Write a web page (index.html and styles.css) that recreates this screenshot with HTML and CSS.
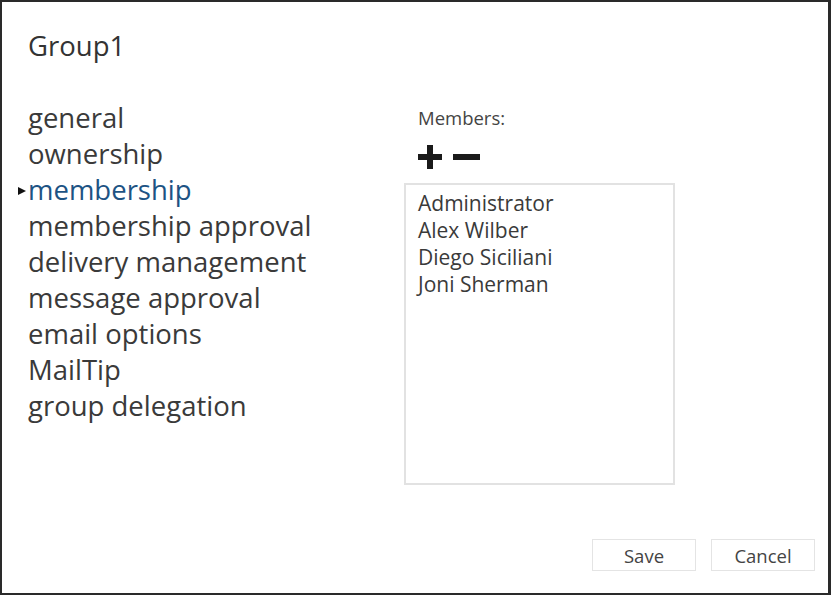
FILE: index.html
```html
<!DOCTYPE html>
<html lang="en">
<head>
<meta charset="UTF-8">
<title>Group1</title>
<link rel="stylesheet" href="styles.css">
</head>
<body>
<div class="dialog">
    <h1 class="titulo">Group1</h1>

    <div class="corpo">
        <ul class="menu">
            <li>general</li>
            <li>ownership</li>
            <li class="ativo">membership</li>
            <li>membership approval</li>
            <li>delivery management</li>
            <li>message approval</li>
            <li>email options</li>
            <li>MailTip</li>
            <li>group delegation</li>
        </ul>

        <div class="membros">
            <p class="rotulo">Members:</p>
            <div class="acoes">
                <span class="mais"></span>
                <span class="menos"></span>
            </div>
            <ul class="lista">
                <li>Administrator</li>
                <li>Alex Wilber</li>
                <li>Diego Siciliani</li>
                <li>Joni Sherman</li>
            </ul>
        </div>
    </div>

    <div class="rodape">
        <button class="botao">Save</button>
        <button class="botao">Cancel</button>
    </div>
</div>
</body>
</html>
```

FILE: styles.css
```css
body{
    margin: 0;
    padding: 0;
    background: #fff;
    font-family: 'Open Sans', 'Liberation Sans', sans-serif;
}

.dialog{
    width: 826px;
    height: 591px;
    border-top: 2px solid #2a2a2a;
    border-left: 2px solid #2a2a2a;
    border-right: 3px solid #2a2a2a;
    border-bottom: 2px solid #2a2a2a;
    display: flex;
    flex-direction: column;
}

.titulo{
    margin: 26px 0 0 26px;
    font-size: 27.5px;
    font-weight: 400;
    line-height: 36px;
    color: #333;
}

.corpo{
    display: flex;
    margin-top: 36px;
}

.menu{
    list-style: none;
    margin: 0;
    padding: 0 0 0 26px;
    width: 376px;
}

.menu li{
    font-size: 27.5px;
    line-height: 36px;
    color: #3a3a3a;
    position: relative;
}

.menu li.ativo{
    color: #1d5384;
}

.menu li.ativo::before{
    content: "";
    position: absolute;
    left: -10px;
    top: 15px;
    border-left: 8px solid #111;
    border-top: 4px solid transparent;
    border-bottom: 4px solid transparent;
}

.rotulo{
    margin: 6px 0 0 14px;
    font-size: 18.5px;
    line-height: 24px;
    color: #444;
}

.acoes{
    display: flex;
    gap: 11px;
    margin: 17px 0 0 14px;
    height: 20px;
    align-items: center;
}

.mais{
    width: 24px;
    height: 20px;
    position: relative;
}

.mais::before, .mais::after{
    content: "";
    position: absolute;
    background: #1a1a1a;
}

.mais::before{
    left: 0;
    top: 7px;
    width: 24px;
    height: 6px;
}

.mais::after{
    left: 9px;
    top: -2px;
    width: 6px;
    height: 24px;
}

.menos{
    width: 27px;
    height: 6px;
    background: #1a1a1a;
}

.lista{
    list-style: none;
    margin: 16px 0 0 0;
    padding: 5px 0 0 12px;
    width: 255px;
    height: 293px;
    border: 2px solid #e2e2e2;
}

.lista li{
    font-size: 21px;
    line-height: 27px;
    color: #3a3a3a;
}

.rodape{
    margin-top: auto;
    margin-bottom: 22px;
    display: flex;
    justify-content: flex-end;
    gap: 15px;
    padding-right: 13px;
}

.botao{
    width: 104px;
    height: 32px;
    background: #fff;
    border: 1px solid #e4e4e4;
    font-family: 'Open Sans', 'Liberation Sans', sans-serif;
    font-size: 18.5px;
    color: #444;
}
```
